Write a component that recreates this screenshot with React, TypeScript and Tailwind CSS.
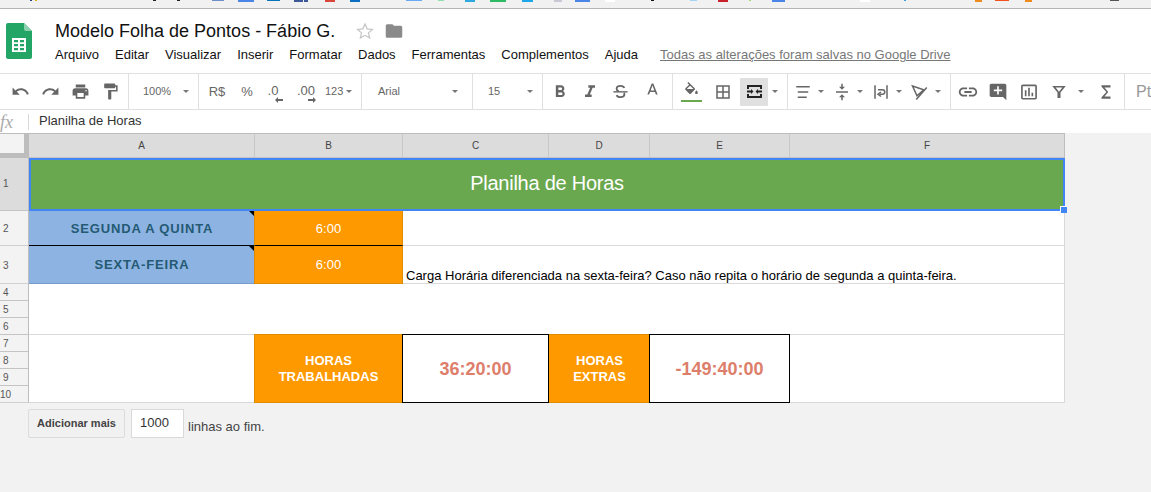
import React from "react";

const P = ({ d, s = 18, c = "#666", rule }: { d: string; s?: number; c?: string; rule?: boolean }) => (
  <svg width={s} height={s} viewBox="0 0 24 24" fill={c} fillRule={rule ? "evenodd" : "nonzero"}>
    <path d={d} />
  </svg>
);

const Caret = () => <span className="block w-0 h-0 shrink-0 border-x-[3px] border-x-transparent border-t-[3px] border-t-[#777]" />;

const Btn = ({ children, cls = "w-[30px]" }: { children: React.ReactNode; cls?: string }) => (
  <div className={`h-[28px] flex items-center justify-center shrink-0 ${cls}`}>{children}</div>
);

const icons = {
  undo: "M12.5 8c-2.65 0-5.05.99-6.9 2.6L2 7v9h9l-3.62-3.62c1.39-1.16 3.16-1.88 5.12-1.88 3.54 0 6.55 2.31 7.6 5.5l2.37-.78C21.08 11.03 17.15 8 12.5 8z",
  redo: "M18.4 10.6C16.55 8.99 14.15 8 11.5 8c-4.65 0-8.58 3.03-9.96 7.22L3.9 16c1.05-3.19 4.05-5.5 7.6-5.5 1.95 0 3.73.72 5.12 1.88L13 16h9V7l-3.6 3.6z",
  print: "M19 8H5c-1.66 0-3 1.34-3 3v6h4v4h12v-4h4v-6c0-1.66-1.34-3-3-3zm-3 11H8v-5h8v5zm3-7c-.55 0-1-.45-1-1s.45-1 1-1 1 .45 1 1-.45 1-1 1zm-1-9H6v4h12V3z",
  paint: "M18 4V3c0-.55-.45-1-1-1H5c-.55 0-1 .45-1 1v4c0 .55.45 1 1 1h12c.55 0 1-.45 1-1V6h1v4H9v11c0 .55.45 1 1 1h2c.55 0 1-.45 1-1v-9h8V4h-3z",
  bold: "M15.6 10.79c.97-.67 1.65-1.77 1.65-2.79 0-2.26-1.75-4-4-4H7v14h7.04c2.09 0 3.71-1.7 3.71-3.79 0-1.52-.86-2.82-2.15-3.42zM10 6.5h3c.83 0 1.5.67 1.5 1.5s-.67 1.5-1.5 1.5h-3v-3zm3.5 9H10v-3h3.5c.83 0 1.5.67 1.5 1.5s-.67 1.5-1.5 1.5z",
  italic: "M10 4v3h2.21l-3.42 8H6v3h8v-3h-2.21l3.42-8H18V4z",
  a: "M11 3L5.5 17h2.25l1.12-3h6.25l1.12 3h2.25L13 3h-2zm-1.38 9L12 5.67 14.38 12H9.62z",
  fill: "M16.56 8.94L7.62 0 6.21 1.41l2.38 2.38-5.15 5.15c-.59.59-.59 1.54 0 2.12l5.5 5.5c.29.29.68.44 1.06.44s.77-.15 1.06-.44l5.5-5.5c.59-.58.59-1.53 0-2.12zM5.21 10L10 5.21 14.79 10H5.21zM19 11.5s-2 2.17-2 3.5c0 1.1.9 2 2 2s2-.9 2-2c0-1.33-2-3.5-2-3.5z",
  borders: "M3 3v18h18V3H3zm8 16H5v-6h6v6zm0-8H5V5h6v6zm8 8h-6v-6h6v6zm0-8h-6V5h6v6z",
  valign: "M8 19h3v4h2v-4h3l-4-4-4 4zm8-14h-3V1h-2v4H8l4 4 4-4zM4 11v2h16v-2H4z",
  link: "M3.9 12c0-1.71 1.39-3.1 3.1-3.1h4V7H7c-2.76 0-5 2.24-5 5s2.24 5 5 5h4v-1.9H7c-1.71 0-3.1-1.39-3.1-3.1zM8 13h8v-2H8v2zm9-6h-4v1.9h4c1.71 0 3.1 1.39 3.1 3.1s-1.39 3.1-3.1 3.1h-4V17h4c2.76 0 5-2.24 5-5s-2.24-5-5-5z",
  comment: "M22 4c0-1.1-.9-2-2-2H4c-1.1 0-2 .9-2 2v12c0 1.1.9 2 2 2h14l4 4V4zm-5 7h-4v4h-2v-4H7V9h4V5h2v4h4v2z",
  chart: "M9 17H7v-7h2v7zm4 0h-2V7h2v10zm4 0h-2v-4h2v4zm2.5 2.1h-15V5h15v14.1zm0-16.1h-15c-1.1 0-2 .9-2 2v14c0 1.1.9 2 2 2h15c1.1 0 2-.9 2-2V5c0-1.1-.9-2-2-2z",
  filter: "M3 4h18l-7 8.5V20h-4v-7.5zM7.5 6l4.5 5.5L16.500 6z",
  sigma: "M18 3H6v2l6.500 7L6 19v2h12v-3h-8l5-6-5-6h8z",
  align: "M3 4h18v2H3zM5 11h14v2H5zM5 18h12v2H5z",
};

const Stroke = ({ children, c = "#666", s = 18 }: { children: React.ReactNode; c?: string; s?: number }) => (
  <svg width={s} height={s} viewBox="0 0 24 24" fill="none" stroke={c} strokeWidth={2}>
    {children}
  </svg>
);

const Group = ({ children }: { children: React.ReactNode }) => (
  <div className="w-[39px] flex items-center shrink-0">
    <div className="w-[20px] flex justify-center">{children}</div>
    <span className="ml-[5px]"><Caret /></span>
  </div>
);

const strip: [number, number, string, number][] = [
  [30, 2, "#2b3a8f", 1], [35, 2, "#d8b21f", 1], [153, 3, "#222", 1], [177, 3, "#222", 1],
  [212, 12, "#6f8fc9", 1], [238, 16, "#4a86e8", 2], [267, 13, "#0a74b8", 1], [294, 9, "#3b5998", 2], [304, 4, "#3b5998", 2],
  [325, 10, "#d9453a", 2], [350, 10, "#0a6fc2", 2], [406, 16, "#6aa9f5", 1], [438, 6, "#8fe0b0", 1],
  [465, 10, "#2ea8e0", 2], [490, 16, "#2dba62", 2], [522, 11, "#1ea7e8", 2], [554, 8, "#c9c9d6", 2],
  [575, 15, "#4a86e8", 2], [605, 10, "#ffffff", 2], [651, 3, "#111", 1], [690, 7, "#a5d4f7", 1],
  [718, 10, "#c9202c", 2], [749, 2, "#a8d47a", 1], [772, 13, "#4a86e8", 2], [860, 10, "#ffffff", 2],
  [904, 2, "#39a0e8", 1], [975, 7, "#f08a1d", 2], [995, 14, "#f4511e", 1], [1025, 7, "#f08a1d", 2], [1110, 9, "#555", 1],
];

const RowHead = ({ n, cls = "" }: { n: number; cls?: string }) => (
  <div className={`flex items-center pl-[3px] text-[10px] text-[#555] border-r border-r-[#bdbdbd] ${cls}`}>{n}</div>
);

const ColHead = ({ l, last }: { l: string; last?: boolean }) => (
  <div className={`flex items-center justify-center text-[10px] text-[#444] bg-[#dcdcdc] border-b border-b-[#c4c4c4] ${last ? "border-r border-r-[#bdbdbd]" : "border-r border-r-[#c8c8c8]"}`}>{l}</div>
);

const Tick = () => (
  <svg width={6} height={6} viewBox="0 0 6 6" className="absolute top-0 right-0">
    <path d="M0 0h6v6z" fill="#000" />
  </svg>
);

export default function App() {
  return (
    <div className="w-[1151px] h-[492px] overflow-hidden bg-[#f2f2f2] flex flex-col font-['Liberation_Sans',Arial,sans-serif]">
      {/* bookmark bar remainder */}
      <svg width={1151} height={9} className="block shrink-0">
        <rect width={1151} height={8} fill="#f1f1f1" />
        <rect y={8} width={1151} height={1} fill="#b5b5b5" />
        {strip.map(([x, w, c, h], i) => (
          <rect key={i} x={x} y={0} width={w} height={h} fill={c} />
        ))}
      </svg>

      {/* title + menu */}
      <div className="h-[64px] bg-white flex shrink-0 pl-[6px]">
        <svg width={26} height={36} viewBox="0 0 26 36" className="mt-[14px] shrink-0">
          <path d="M2 0h16l8 8v26a2 2 0 0 1-2 2H2a2 2 0 0 1-2-2V2a2 2 0 0 1 2-2z" fill="#23a566" />
          <path d="M18 0l8 8h-6a2 2 0 0 1-2-2z" fill="#8ed1b1" />
          <path d="M6 15h14v14H6zM8 17v2.300h4V17zM14 17v2.300h4V17zM8 21v2.300h4V21zM14 21v2.300h4V21zM8 25v2.300h4V25zM14 25v2.300h4V25z" fill="#fff" fillRule="evenodd" />
        </svg>
        <div className="ml-[23px] flex flex-col">
          <div className="flex items-center h-[22px] mt-[11px]">
            <span className="text-[18px] leading-[22px] text-[#111]">Modelo Folha de Pontos - Fábio G.</span>
            <svg width={18} height={18} viewBox="0 0 24 24" className="ml-[21px]" fill="none" stroke="#c4c4c4" strokeWidth={1.6}>
              <path d="M12 2.500l2.900 6.600 7.100.7-5.400 4.700 1.600 7-6.200-3.700-6.200 3.700 1.600-7L2 9.800l7.100-.7z" />
            </svg>
            <svg width={18} height={18} viewBox="0 0 24 24" className="ml-[11px]" fill="#8a8a8a">
              <path d="M10 3H3a2 2 0 0 0-2 2v14a2 2 0 0 0 2 2h18a2 2 0 0 0 2-2V7a2 2 0 0 0-2-2H12z" />
            </svg>
          </div>
          <div className="flex mt-[5px] text-[13px] leading-[16px] text-[#111] gap-[16px] whitespace-nowrap">
            <span>Arquivo</span>
            <span>Editar</span>
            <span>Visualizar</span>
            <span>Inserir</span>
            <span>Formatar</span>
            <span>Dados</span>
            <span>Ferramentas</span>
            <span>Complementos</span>
            <span>Ajuda</span>
            <span className="ml-[6px] text-[#777] underline">Todas as alterações foram salvas no Google Drive</span>
          </div>
        </div>
      </div>

      {/* toolbar */}
      <div className="h-[37px] bg-white border-y border-y-[#e0e0e0] flex items-center shrink-0 text-[#666] whitespace-nowrap [&>div]:h-full [&>div]:flex [&>div]:items-center [&>div]:shrink-0 [&>div]:border-r [&>div]:border-r-[#e0e0e0]">
        <div className="w-[129px] pl-[5px]">
          <Btn><P d={icons.undo} s={19} /></Btn>
          <Btn><P d={icons.redo} s={19} /></Btn>
          <Btn><P d={icons.print} s={19} /></Btn>
          <Btn><P d={icons.paint} s={19} /></Btn>
        </div>
        <div className="w-[70px] pl-[14px]">
          <span className="w-[28px] text-[11px]">100%</span>
          <span className="ml-[12px]"><Caret /></span>
        </div>
        <div className="w-[163px] pl-[3px] text-[13px]">
          <Btn><span>R$</span></Btn>
          <Btn><span>%</span></Btn>
          <Btn cls="w-[22px]">
            <div className="flex flex-col items-end pt-[5px]">
              <span className="text-[13px] leading-[11px]">.0</span>
              <svg width={8} height={6} viewBox="0 0 8 6" className="mt-[1px] -mr-[5px]" fill="#666"><path d="M0 3l3-3v2h5v2H3v2z" /></svg>
            </div>
          </Btn>
          <Btn cls="w-[36px] ml-[4px]">
            <div className="flex flex-col items-end pt-[5px]">
              <span className="text-[13px] leading-[11px]">.00</span>
              <svg width={8} height={6} viewBox="0 0 8 6" className="mt-[1px] -mr-[1px]" fill="#666"><path d="M8 3L5 0v2H0v2h5v2z" /></svg>
            </div>
          </Btn>
          <span className="w-[18px] ml-[1px] mr-[3px] text-[11px] text-center">123</span>
          <Caret />
        </div>
        <div className="w-[111px] pl-[16px] pr-[14px] justify-between">
          <span className="text-[11px] text-[#666]">Arial</span>
          <Caret />
        </div>
        <div className="w-[70px] pl-[15px] pr-[9px] justify-between">
          <span className="text-[11px] text-[#666]">15</span>
          <Caret />
        </div>
        <div className="w-[130px] pl-[2px]">
          <Btn><P d={icons.bold} s={20} /></Btn>
          <Btn><P d={icons.italic} s={20} /></Btn>
          <Btn>
            <Stroke s={17}>
              <path d="M17.500 7c-.8-1.800-2.700-3-5.500-3-3.200 0-5.500 1.600-5.500 4 0 1.600 1 2.800 3 3.500M6.500 17c.8 1.800 2.700 3 5.500 3 3.200 0 5.500-1.600 5.500-4 0-.8-.3-1.500-.8-2" strokeWidth={2.6} />
              <path d="M2 12.500h20" strokeWidth={2} />
            </Stroke>
          </Btn>
          <Btn cls="w-[30px] ml-[2px] pb-[3px]"><P d={icons.a} s={19} /></Btn>
        </div>
        <div className="w-[115px] pl-[3px]">
          <Btn>
            <div className="flex flex-col items-center">
              <P d={icons.fill} s={17} />
              <span className="block w-[21px] h-[2px] bg-[#6aa84f] mt-[1px]" />
            </div>
          </Btn>
          <Btn cls="w-[30px] ml-[2px]"><P d={icons.borders} /></Btn>
          <Btn cls="w-[28px] ml-[2px] bg-[#e0e0e0] rounded-[1px]">
            <svg width={15} height={13} viewBox="0 0 15 13" fill="#222">
              <path d="M0 0h15v4h-2V2H2v2H0zM0 9h2v2h11V9h2v4H0zM0 5.500h4V4l2.500 2.500L4 9V7.500H0zM15 5.500h-4V4L8.500 6.500 11 9V7.500h4z" />
            </svg>
          </Btn>
          <span className="ml-[4px]"><Caret /></span>
        </div>
        <div className="w-[163px] pl-[5px]">
          <Group><P d={icons.align} /></Group>
          <Group><P d={icons.valign} /></Group>
          <Group>
            <Stroke>
              <path d="M4 3v18M20 3v18M8 9h6a3 3 0 0 1 0 6h-4" />
              <path d="M12 12l-4 3 4 3" />
            </Stroke>
          </Group>
          <Group>
            <Stroke>
              <path d="M2 4l15 5-9 8zM21 6L7 22" />
            </Stroke>
          </Group>
        </div>
        <div className="w-[174px] pl-[2px]">
          <Btn><P d={icons.link} s={22} /></Btn>
          <Btn><P d={icons.comment} s={20} /></Btn>
          <Btn cls="w-[30px] ml-[1px]"><P d={icons.chart} s={20} /></Btn>
          <Btn cls="w-[30px]"><P d={icons.filter} rule /></Btn>
          <span className="ml-[4px]"><Caret /></span>
          <Btn cls="w-[30px] ml-[7px]"><P d={icons.sigma} /></Btn>
        </div>
        <div className="!border-r-0 pl-[11px] text-[16px] text-[#999]">Pt</div>
      </div>

      {/* formula bar */}
      <div className="h-[23px] bg-white flex items-center shrink-0">
        <span className="w-[28px] text-[18px] italic text-[#aaa] font-['Liberation_Serif',serif] leading-none">fx</span>
        <span className="w-px h-[16px] bg-[#d9d9d9]" />
        <span className="ml-[10px] pb-[2px] text-[13px] text-[#333]">Planilha de Horas</span>
      </div>

      {/* sheet */}
      <div className="grid grid-cols-[29px_226px_148px_146px_101px_140px_275px] grid-rows-[24px_53px_35px_38px_17px_17px_17px_17px_17px_17px_17px] w-[1065px] border-t border-t-[#bdbdbd] shrink-0 text-[#000]">
        <div className="bg-[#bdbdbd]">
          <div className="w-[24px] h-[19px] bg-[#f3f3f3]" />
        </div>
        <ColHead l="A" />
        <ColHead l="B" />
        <ColHead l="C" />
        <ColHead l="D" />
        <ColHead l="E" />
        <ColHead l="F" last />

        <RowHead n={1} cls="bg-[#dcdcdc] border-b border-b-[#c4c4c4] pb-[2px]" />
        <div className="col-span-6 relative bg-[#6aa84f] border-2 border-[#4285f4] flex items-center justify-center pb-[3px] text-[20px] tracking-[-0.25px] text-white">
          Planilha de Horas
          <span className="absolute -right-[4px] -bottom-[4px] w-[7px] h-[7px] bg-[#4285f4] border-l border-t border-white" />
        </div>

        <RowHead n={2} cls="bg-[#f3f3f3] border-b border-b-[#d0d0d0] pt-[1px]" />
        <div className="relative bg-[#8db3e2] border-b border-b-black flex items-center justify-center pt-[1px] text-[13px] font-bold tracking-[0.85px] text-[#245a73]">
          SEGUNDA A QUINTA
          <Tick />
        </div>
        <div className="relative -ml-px pt-[1px] bg-[#ff9900] border-l border-r border-l-[#e08c00] border-r-[#e08c00] border-b border-b-black flex items-center justify-center text-[13px] text-white">6:00</div>
        <div className="col-span-4 bg-white border-r border-r-[#d9d9d9] border-b border-b-[#d9d9d9]" />

        <RowHead n={3} cls="bg-[#f3f3f3] border-b border-b-[#d0d0d0] pt-[1px]" />
        <div className="relative bg-[#8db3e2] border-b border-b-[#7a9acb] flex items-center justify-center pt-[1px] text-[13px] font-bold tracking-[0.85px] text-[#245a73]">
          SEXTA-FEIRA
          <Tick />
        </div>
        <div className="relative -ml-px pt-[1px] bg-[#ff9900] border-l border-r border-l-[#e08c00] border-r-[#e08c00] border-b border-b-[#e08c00] flex items-center justify-center text-[13px] text-white">6:00</div>
        <div className="col-span-4 bg-white border-r border-r-[#d9d9d9] border-b border-b-[#d9d9d9] flex items-end pl-[3px] text-[13px] leading-[15px] whitespace-nowrap">
          Carga Horária diferenciada na sexta-feira? Caso não repita o horário de segunda a quinta-feira.
        </div>

        <RowHead n={4} cls="bg-[#f3f3f3] border-b border-b-[#c4c4c4] row-start-5 col-start-1" />
        <div className="col-start-2 col-span-6 row-start-5 row-span-3 bg-white border-r border-r-[#d9d9d9] border-b border-b-[#d9d9d9]" />
        <RowHead n={5} cls="bg-[#f3f3f3] border-b border-b-[#c4c4c4] row-start-6 col-start-1" />
        <RowHead n={6} cls="bg-[#f3f3f3] border-b border-b-[#c4c4c4] row-start-7 col-start-1" />
        <RowHead n={7} cls="bg-[#f3f3f3] border-b border-b-[#c4c4c4] row-start-8 col-start-1" />
        <RowHead n={8} cls="bg-[#f3f3f3] border-b border-b-[#c4c4c4] row-start-9 col-start-1" />
        <RowHead n={9} cls="bg-[#f3f3f3] border-b border-b-[#c4c4c4] row-start-10 col-start-1" />
        <RowHead n={10} cls="bg-[#f3f3f3] border-b border-b-[#d0d0d0] row-start-11 col-start-1 !pl-0" />

        <div className="col-start-2 row-start-8 row-span-4 bg-white border-b border-b-[#d9d9d9]" />
        <div className="col-start-3 row-start-8 row-span-4 -ml-px -mt-px bg-[#ff9900] border border-[#e08c00] flex items-center justify-center text-center text-[13px] leading-[16px] font-bold text-white">
          HORAS<br />TRABALHADAS
        </div>
        <div className="col-start-4 row-start-8 row-span-4 -ml-px -mt-px pt-[1px] bg-white border border-black flex items-center justify-center text-[18px] font-bold text-[#dd7e6b]">36:20:00</div>
        <div className="col-start-5 row-start-8 row-span-4 -mt-px bg-[#ff9900] border-y border-y-[#e08c00] flex items-center justify-center text-center text-[13px] leading-[16px] font-bold text-white">
          HORAS<br />EXTRAS
        </div>
        <div className="col-start-6 row-start-8 row-span-4 -ml-px -mt-px pt-[1px] bg-white border border-black flex items-center justify-center text-[18px] font-bold text-[#dd7e6b]">-149:40:00</div>
        <div className="col-start-7 row-start-8 row-span-4 bg-white border-r border-r-[#d9d9d9] border-b border-b-[#d9d9d9]" />
      </div>

      {/* add rows */}
      <div className="flex items-center pl-[28px] pt-[6px]">
        <div className="w-[97px] h-[29px] bg-[#f1f1f1] border border-[#dcdcdc] rounded-[2px] flex items-center justify-center text-[11px] font-bold text-[#444]">Adicionar mais</div>
        <div className="w-[53px] h-[29px] ml-[6px] bg-white border border-[#d9d9d9] flex items-center pl-[8px] pb-[2px] text-[13px] text-[#333]">1000</div>
        <span className="ml-[4px] mt-[6px] text-[13px] text-[#444]">linhas ao fim.</span>
      </div>
    </div>
  );
}
